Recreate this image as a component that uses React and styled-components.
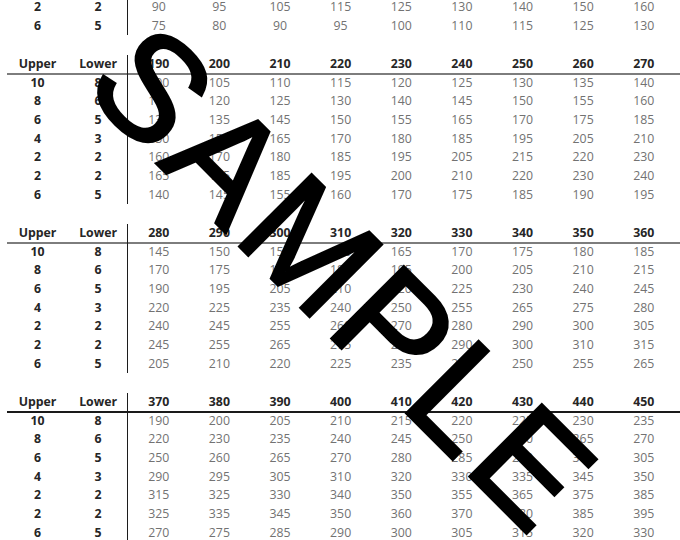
import React from 'react'
import styled, { createGlobalStyle } from 'styled-components'

const blocks = [
	{
		rows: [
			[2, 2, [90, 95, 105, 115, 125, 130, 140, 150, 160]],
			[6, 5, [75, 80, 90, 95, 100, 110, 115, 125, 130]],
		],
	},
	{
		head: [190, 200, 210, 220, 230, 240, 250, 260, 270],
		rule: '#7d7d7d',
		rows: [
			[10, 8, [100, 105, 110, 115, 120, 125, 130, 135, 140]],
			[8, 6, [115, 120, 125, 130, 140, 145, 150, 155, 160]],
			[6, 5, [130, 135, 145, 150, 155, 165, 170, 175, 185]],
			[4, 3, [150, 155, 165, 170, 180, 185, 195, 205, 210]],
			[2, 2, [160, 170, 180, 185, 195, 205, 215, 220, 230]],
			[2, 2, [165, 175, 185, 195, 200, 210, 220, 230, 240]],
			[6, 5, [140, 145, 155, 160, 170, 175, 185, 190, 195]],
		],
	},
	{
		head: [280, 290, 300, 310, 320, 330, 340, 350, 360],
		rule: '#7d7d7d',
		rows: [
			[10, 8, [145, 150, 155, 160, 165, 170, 175, 180, 185]],
			[8, 6, [170, 175, 180, 185, 195, 200, 205, 210, 215]],
			[6, 5, [190, 195, 205, 210, 220, 225, 230, 240, 245]],
			[4, 3, [220, 225, 235, 240, 250, 255, 265, 275, 280]],
			[2, 2, [240, 245, 255, 260, 270, 280, 290, 300, 305]],
			[2, 2, [245, 255, 265, 275, 285, 290, 300, 310, 315]],
			[6, 5, [205, 210, 220, 225, 235, 240, 250, 255, 265]],
		],
	},
	{
		head: [370, 380, 390, 400, 410, 420, 430, 440, 450],
		rule: '#1a1a1a',
		rows: [
			[10, 8, [190, 200, 205, 210, 215, 220, 225, 230, 235]],
			[8, 6, [220, 230, 235, 240, 245, 250, 260, 265, 270]],
			[6, 5, [250, 260, 265, 270, 280, 285, 290, 300, 305]],
			[4, 3, [290, 295, 305, 310, 320, 330, 335, 345, 350]],
			[2, 2, [315, 325, 330, 340, 350, 355, 365, 375, 385]],
			[2, 2, [325, 335, 345, 350, 360, 370, 380, 385, 395]],
			[6, 5, [270, 275, 285, 290, 300, 305, 315, 320, 330]],
		],
	},
]

const GlobalStyle = createGlobalStyle`
	html, body {
		margin: 0;
		background: #ffffff;
		overflow: hidden;
	}
`

const App = () => {
	return (
		<>
			<GlobalStyle />
			<StyledPage>
				{blocks.map((block, b) => (
					<StyledBlock key={b}>
						{block.head && (
							<StyledRow $rule={block.rule}>
								<StyledKey>Upper</StyledKey>
								<StyledKey>Lower</StyledKey>
								{block.head.map((h, i) => (
									<StyledKey key={i} $divider={i === 0}>
										{h}
									</StyledKey>
								))}
							</StyledRow>
						)}
						{block.rows.map(([upper, lower, values], r) => (
							<StyledRow key={r}>
								<StyledKey>{upper}</StyledKey>
								<StyledKey>{lower}</StyledKey>
								{values.map((v, i) => (
									<StyledValue key={i} $divider={i === 0}>
										{v}
									</StyledValue>
								))}
							</StyledRow>
						))}
					</StyledBlock>
				))}
				<StyledWatermark>SAMPLE</StyledWatermark>
			</StyledPage>
		</>
	)
}

const StyledPage = styled.div`
	position: relative;
	display: flex;
	flex-direction: column;
	gap: 19.5px;
	margin-top: -2px;
	padding-left: 7.2px;
	font-family: 'Open Sans', 'Liberation Sans', sans-serif;
	font-size: 12.3px;
`

const StyledBlock = styled.div`
	display: flex;
	flex-direction: column;
`

const StyledRow = styled.div`
	display: grid;
	grid-template-columns: repeat(11, 60.64px);
	height: 18.7px;
	box-shadow: ${props => (props.$rule ? `0 1px 0 ${props.$rule}, inset 0 -1px 0 ${props.$rule}` : 'none')};
`

const StyledCell = styled.div`
	display: flex;
	align-items: center;
	justify-content: center;
	line-height: 18.7px;
	border-left: ${props => (props.$divider ? '1.5px solid #1c1c1c' : 'none')};
	margin-left: ${props => (props.$divider ? '-1px' : '0')};
`

const StyledKey = styled(StyledCell)`
	font-weight: 700;
	color: #262626;
`

const StyledValue = styled(StyledCell)`
	font-weight: 400;
	color: #727272;
`

const StyledWatermark = styled.div`
	position: absolute;
	left: 170px;
	top: 2px;
	font-family: 'Liberation Sans', Arial, sans-serif;
	font-size: 148px;
	line-height: 1;
	letter-spacing: 7px;
	color: #000000;
	-webkit-text-stroke: 3px #000000;
	white-space: nowrap;
	transform: rotate(45deg);
	transform-origin: 0 0;
	pointer-events: none;
`

export default App
